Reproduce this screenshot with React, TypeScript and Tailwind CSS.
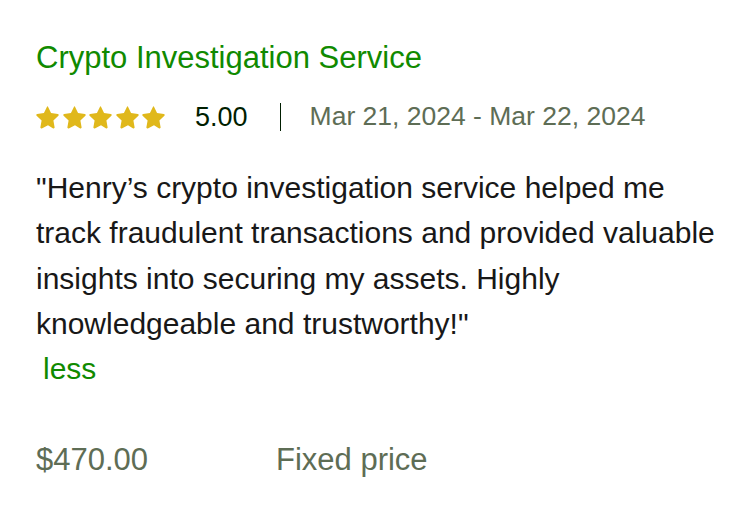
import React from "react";

function Star() {
  return (
    <svg viewBox="0 0 24 24" className="w-[24px] h-[24px]" fill="#e0b81b">
      <path
        d="M12 1.8l3.05 6.3 6.85.95c.8.1 1.1 1.1.5 1.65l-5 4.8 1.2 6.85c.15.8-.7 1.4-1.4 1.05L12 20.2l-6.2 3.2c-.7.35-1.55-.25-1.4-1.05l1.2-6.85-5-4.8c-.6-.55-.3-1.550.5-1.65l6.85-.95L11 1.8c.35-.75 1.4-.75 1 0z"
      />
    </svg>
  );
}

export default function App() {
  const font = { fontFamily: '"Liberation Sans", Arial, sans-serif' };

  return (
    <div className="w-[755px] h-[516px] bg-white" style={font}>
      <div className="pl-[36px] pt-[40px]">
        {/* Title */}
        <h2 className="text-[31px] leading-[36px] text-[#108a00]">
          Crypto Investigation Service
        </h2>

        {/* Rating row */}
        <div className="flex items-center mt-[26px] h-[30px]">
          <div className="flex gap-[2.5px]">
            {[0, 1, 2, 3, 4].map((i) => (
              <Star key={i} />
            ))}
          </div>
          <span className="ml-[29px] text-[27px] text-[#001e00]">5.00</span>
          <div className="ml-[32px] w-px h-[28px] bg-[#001e00]" />
          <span className="ml-[29px] text-[26.5px] text-[#5e6d55]">
            Mar 21, 2024 - Mar 22, 2024
          </span>
        </div>

        {/* Review */}
        <p className="mt-[33px] w-[690px] text-[30px] leading-[45.3px] text-[#181818]">
          "Henry’s crypto investigation service helped me track fraudulent
          transactions and provided valuable insights into securing my
          assets. Highly knowledgeable and trustworthy!"
        </p>
        <button className="block text-[30px] leading-[45.3px] text-[#108a00] pl-[7px]">
          less
        </button>

        {/* Price */}
        <div className="flex mt-[52px] text-[31px] leading-[34px] text-[#5e6d55]">
          <span className="w-[240px]">$470.00</span>
          <span>Fixed price</span>
        </div>
      </div>
    </div>
  );
}
